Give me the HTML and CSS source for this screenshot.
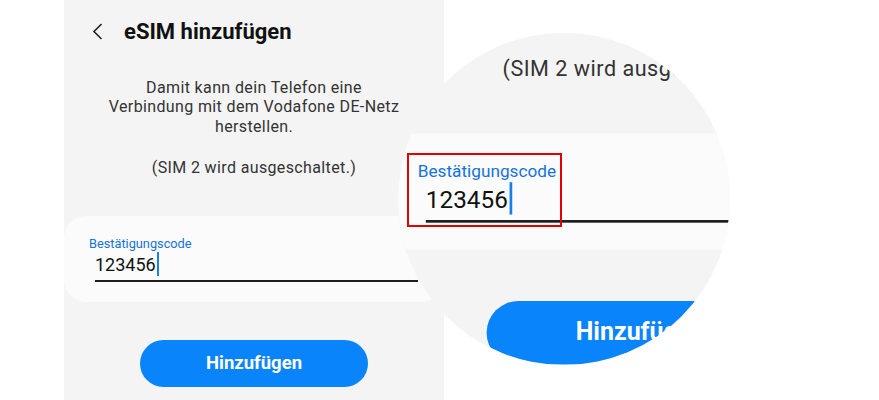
FILE: index.html
```html
<!DOCTYPE html>
<html lang="de">
<head>
<meta charset="utf-8">
<title>eSIM hinzufügen</title>
<link rel="stylesheet" href="styles.css">
</head>
<body>
<div class="stage">
  <section class="phone">
    <header class="appbar">
      <svg class="back" width="11" height="17" viewBox="0 0 11 17"><path d="M9.5 1 L2 8.5 L9.5 16" fill="none" stroke="#222" stroke-width="1.6"/></svg>
      <h1 class="title">eSIM hinzufügen</h1>
    </header>
    <p class="desc">Damit kann dein Telefon eine<br>Verbindung mit dem Vodafone DE-Netz<br>herstellen.</p>
    <p class="note">(SIM 2 wird ausgeschaltet.)</p>
    <div class="card">
      <div class="label">Bestätigungscode</div>
      <div class="field"><span class="value">123456</span><span class="caret"></span></div>
    </div>
    <div class="actions"><button class="btn">Hinzufügen</button></div>
  </section>
</div>

<div class="magnifier" aria-hidden="true">
  <section class="phone phone-zoomed">
    <header class="appbar">
      <svg class="back" width="11" height="17" viewBox="0 0 11 17"><path d="M9.5 1 L2 8.5 L9.5 16" fill="none" stroke="#222" stroke-width="1.6"/></svg>
      <h1 class="title">eSIM hinzufügen</h1>
    </header>
    <p class="desc">Damit kann dein Telefon eine<br>Verbindung mit dem Vodafone DE-Netz<br>herstellen.</p>
    <p class="note">(SIM 2 wird ausgeschaltet.)</p>
    <div class="card">
      <div class="label">Bestätigungscode</div>
      <div class="field"><span class="value">123456</span><span class="caret"></span></div>
    </div>
    <div class="actions"><button class="btn">Hinzufügen</button></div>
  </section>
</div>
<div class="highlight"></div>
</body>
</html>
```
FILE: styles.css
```css
html, body {
  margin: 0;
  padding: 0;
}
body {
  width: 879px;
  height: 400px;
  overflow: hidden;
  background: #ffffff;
  position: relative;
  font-family: Roboto, "Noto Sans", "Liberation Sans", sans-serif;
}
.stage {
  display: flex;
  padding-left: 64px;
}
.phone {
  width: 380px;
  height: 400px;
  background: #f4f4f4;
  display: flex;
  flex-direction: column;
  flex-shrink: 0;
}
.appbar {
  height: 62px;
  display: flex;
  align-items: center;
  padding-left: 28px;
}
.back {
  display: block;
  margin-right: 21px;
}
.title {
  margin: 0;
  font-size: 22px;
  font-weight: 700;
  color: #111;
}
.desc {
  margin: 15.7px 0 0;
  font-size: 16px;
  letter-spacing: 0.37px;
  line-height: 19.5px;
  color: #333;
  text-align: center;
}
.note {
  margin: 21.5px 0 0;
  font-size: 16px;
  letter-spacing: 0.37px;
  line-height: 19.5px;
  color: #333;
  text-align: center;
}
.card {
  margin-top: 38.5px;
  background: #fbfbfb;
  border-radius: 22px;
  padding: 20px 26px 20px 25px;
}
.label {
  font-size: 12.75px;
  line-height: 16px;
  color: #1473dc;
}
.field {
  margin-left: 6px;
  padding-bottom: 4px;
  border-bottom: 2px solid #1e1e1e;
  font-size: 18px;
  line-height: 22px;
  color: #111;
  height: 24px;
}
.caret {
  display: inline-block;
  width: 2px;
  height: 24px;
  margin-left: 1px;
  background: #1a7ee6;
  vertical-align: -5px;
}
.actions {
  display: flex;
  justify-content: center;
  margin-top: 38px;
}
.btn {
  width: 228px;
  height: 47px;
  border: none;
  border-radius: 24px;
  background: #0a84fb;
  color: #fff;
  font-family: inherit;
  font-size: 18.5px;
  font-weight: 700;
  padding: 0;
}
.magnifier {
  position: absolute;
  left: 398px;
  top: 33px;
  width: 332px;
  height: 332px;
  border-radius: 50%;
  overflow: hidden;
  background: #f4f4f4;
}
.phone-zoomed {
  position: absolute;
  left: -14.1px;
  top: -190.8px;
  transform: scale(1.35);
  transform-origin: 0 0;
}
.highlight {
  position: absolute;
  left: 407px;
  top: 153px;
  width: 151px;
  height: 70px;
  border: 2px solid #e10000;
}
```
